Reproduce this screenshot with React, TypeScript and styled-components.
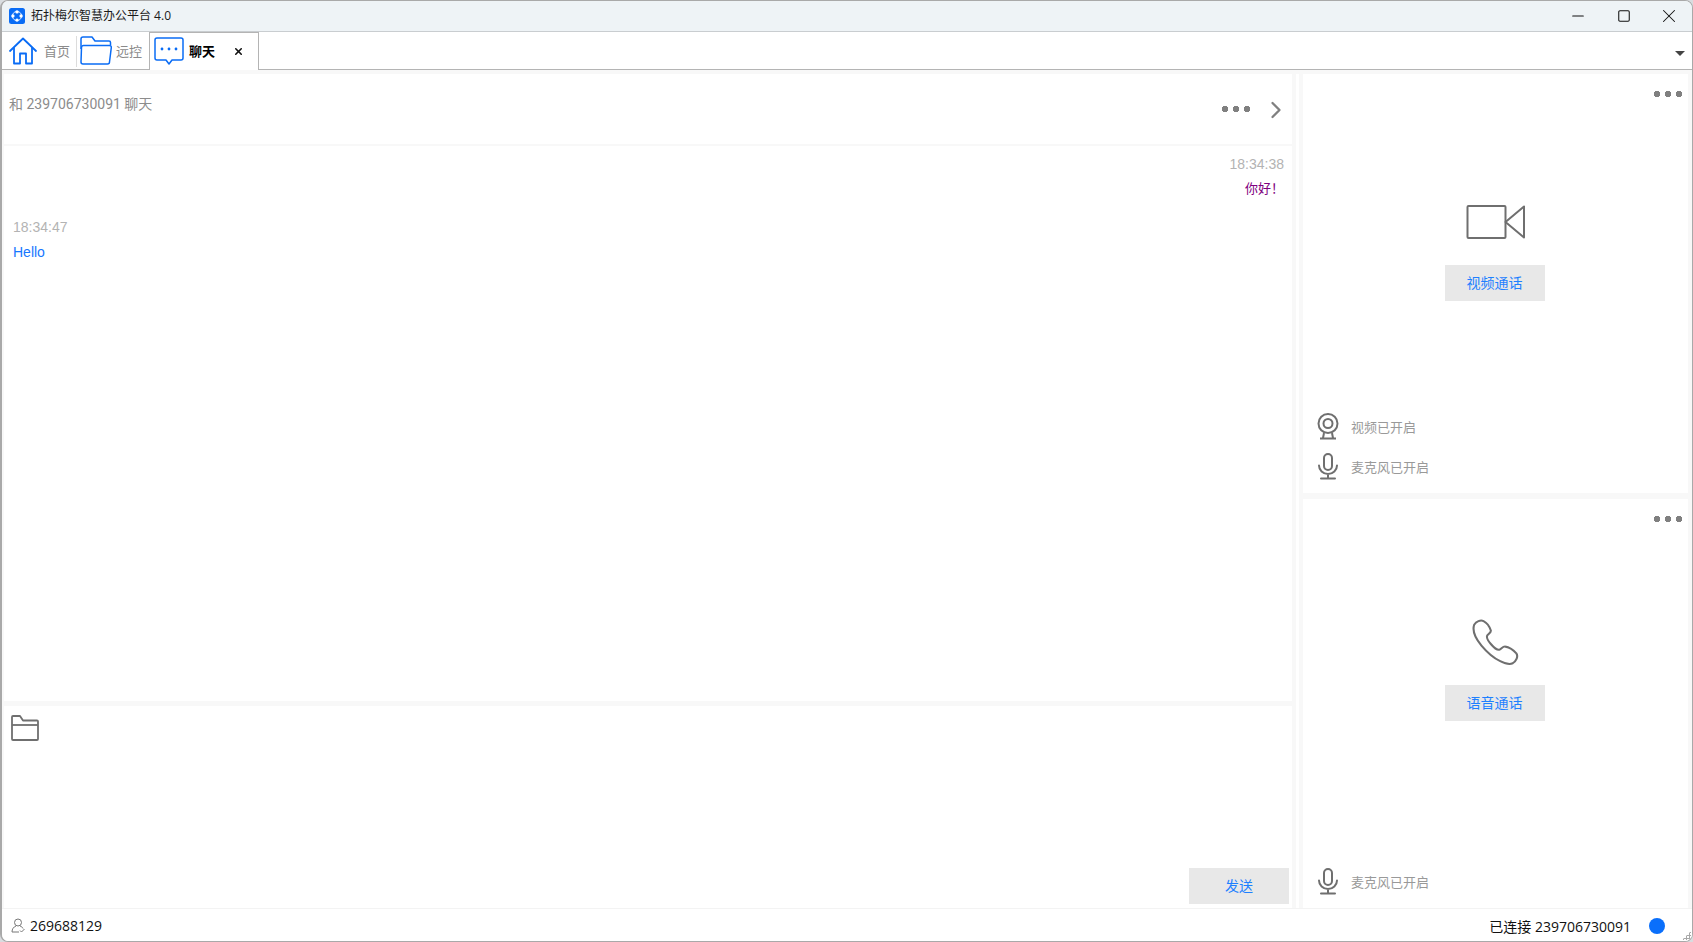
import React from "react";
import styled, { createGlobalStyle } from "styled-components";
import { ChevronRight, Minus, Square, X } from "lucide-react";

const GlobalStyle = createGlobalStyle`
	html, body, #root {
		margin: 0;
		padding: 0;
		width: 100%;
		height: 100%;
		overflow: hidden;
		background: #d9dcdf;
	}
	* {
		box-sizing: border-box;
	}
`;

const uiFont = `"Open Sans", "Noto Sans CJK SC", sans-serif`;
const chatFont = `"Liberation Sans", "Noto Sans CJK SC", sans-serif`;

export default function App() {
	return (
		<>
			<GlobalStyle />
			<Win>
				<TitleBar>
					<AppLogo />
					<AppTitle>拓扑梅尔智慧办公平台 4.0</AppTitle>
					<WinButtons>
						<WinButton><Minus size={18} strokeWidth={1.6} /></WinButton>
						<WinButton><Square size={14} strokeWidth={1.8} /></WinButton>
						<WinButton><X size={22} strokeWidth={1.1} /></WinButton>
					</WinButtons>
				</TitleBar>
				<TabBar>
					<Tab>
						<HomeIcon />
						<TabLabel>首页</TabLabel>
					</Tab>
					<TabDivider />
					<Tab $gap={4}>
						<FolderBlueIcon />
						<TabLabel>远控</TabLabel>
					</Tab>
					<ActiveTab>
						<ChatIcon />
						<ActiveLabel>聊天</ActiveLabel>
						<TabClose><X size={11} strokeWidth={3.5} /></TabClose>
					</ActiveTab>
					<TabMenu />
				</TabBar>
				<Body>
					<ChatColumn>
						<ChatHeader>
							<ChatTitle>和 239706730091 聊天</ChatTitle>
							<Dots $down={9} />
							<HeaderChevron><ChevronRight size={28} strokeWidth={2} /></HeaderChevron>
						</ChatHeader>
						<Messages>
							<Message $mine>
								<MessageTime>18:34:38</MessageTime>
								<MessageText $mine>你好！</MessageText>
							</Message>
							<Message>
								<MessageTime>18:34:47</MessageTime>
								<MessageText>Hello</MessageText>
							</Message>
						</Messages>
						<Composer>
							<FolderIcon />
							<ComposerFoot>
								<ActionButton>发送</ActionButton>
							</ComposerFoot>
						</Composer>
					</ChatColumn>
					<Splitter />
					<CallColumn>
						<CallPanel $grow={420}>
							<PanelTop><Dots /></PanelTop>
							<CallCenter $top={107} $gap={25}>
								<VideoIcon />
								<ActionButton>视频通话</ActionButton>
							</CallCenter>
							<StatusRows>
								<StatusRow><WebcamIcon /><StatusText>视频已开启</StatusText></StatusRow>
								<StatusRow><MicIcon /><StatusText>麦克风已开启</StatusText></StatusRow>
							</StatusRows>
						</CallPanel>
						<CallPanel $grow={410}>
							<PanelTop><Dots /></PanelTop>
							<CallCenter $top={97} $gap={16}>
								<PhoneIcon />
								<ActionButton>语音通话</ActionButton>
							</CallCenter>
							<StatusRows>
								<StatusRow><MicIcon /><StatusText>麦克风已开启</StatusText></StatusRow>
							</StatusRows>
						</CallPanel>
					</CallColumn>
				</Body>
				<StatusBar>
					<UserIcon />
					<StatusValue>269688129</StatusValue>
					<StatusValue $push>已连接 239706730091</StatusValue>
					<OnlineDot />
					<Grip />
				</StatusBar>
			</Win>
		</>
	);
}

function AppLogo() {
	return (
		<svg width="16" height="16" viewBox="0 0 16 16">
			<rect width="16" height="16" rx="2.5" fill="#0a6cf5" />
			<circle cx="8" cy="8" r="4.6" fill="none" stroke="#cfe2ff" strokeWidth="1" />
			<circle cx="8" cy="3.9" r="1.7" fill="#fff" />
			<circle cx="8" cy="12.1" r="1.7" fill="#fff" />
			<circle cx="3.9" cy="8" r="1.7" fill="#fff" />
			<circle cx="12.1" cy="8" r="1.7" fill="#fff" />
		</svg>
	);
}

function HomeIcon() {
	return (
		<svg width="28" height="28" viewBox="0 0 28 28" fill="none" stroke="#0a6cf5" strokeWidth="1.8" strokeLinejoin="round" strokeLinecap="round">
			<path d="M1 14 14 1.5 27 14" />
			<path d="M5 11V26.5H11V16.5H17V26.5H23V11" />
		</svg>
	);
}

function FolderBlueIcon() {
	return (
		<svg width="32" height="29" viewBox="0 0 32 29" fill="none" stroke="#0a6cf5" strokeWidth="1.5" strokeLinejoin="round">
			<path d="M1 13V3a2 2 0 0 1 2-2h9l3 4h14a1.5 1.5 0 0 1 1.5 1.5V9" />
			<path d="M3.500 9.500H29.500a1.800 1.800 0 0 1 1.800 2L29.500 26a2 2 0 0 1-2 2H3a2 2 0 0 1-2-2L1.500 11.500a2 2 0 0 1 2-2Z" />
		</svg>
	);
}

function ChatIcon() {
	return (
		<svg width="30" height="29" viewBox="0 0 30 29" fill="none">
			<path d="M3 1H27a2 2 0 0 1 2 2V21a2 2 0 0 1-2 2H18L15 27 12 23H3a2 2 0 0 1-2-2V3a2 2 0 0 1 2-2Z" stroke="#0a6cf5" strokeWidth="1.5" strokeLinejoin="round" />
			<circle cx="8" cy="12" r="1.4" fill="#0a6cf5" />
			<circle cx="15" cy="12" r="1.4" fill="#0a6cf5" />
			<circle cx="22" cy="12" r="1.4" fill="#0a6cf5" />
		</svg>
	);
}

function VideoIcon() {
	return (
		<svg width="60" height="36" viewBox="-1 0 60 36" fill="none" stroke="#6f6f6f" strokeWidth="2" strokeLinejoin="round">
			<rect x="1.500" y="2" width="38" height="32" rx="1" />
			<path d="M39.500 18 58 2.500V33.500Z" />
		</svg>
	);
}

function PhoneIcon() {
	return (
		<svg width="50" height="50" viewBox="-1 0 48 48" fill="none" stroke="#6f6f6f" strokeWidth="2" strokeLinejoin="round">
			<path d="M3 5.500C5 2.500 9 .5 12 2c3 1.500 6 6 7 9 .5 2-2.500 3.500-3.500 5-1 2 1 5 3.500 8 3 3.500 6 6 8 5.500 2-.5 3.500-3.500 6-3 3 .5 8 3.500 10.500 6.500 2 3 0 7-3.500 9.500-3 1.500-7 .5-12-2-6-3-13-9-18-15C5 19.500 1 11.500 3 5.500Z" />
		</svg>
	);
}

function WebcamIcon() {
	return (
		<svg width="22" height="27" viewBox="0 0 22 27" fill="none" stroke="#6f6f6f" strokeWidth="2">
			<circle cx="11" cy="10.500" r="9.500" />
			<circle cx="11" cy="10.500" r="4.500" />
			<path d="M7 20 6 25M15 20l1 5M3 25.500H19" />
		</svg>
	);
}

function MicIcon() {
	return (
		<svg width="22" height="27" viewBox="0 0 22 27" fill="none" stroke="#6f6f6f" strokeWidth="2" strokeLinecap="round">
			<rect x="7" y="1" width="8" height="16" rx="4" />
			<path d="M2 12.500a9 8.500 0 0 0 18 0M11 21V25.500M4 25.500H18" />
		</svg>
	);
}

function FolderIcon() {
	return (
		<svg width="28" height="26" viewBox="0 0 28 26" fill="none" stroke="#6f6f6f" strokeWidth="1.800" strokeLinejoin="round">
			<path d="M1 7V2a1 1 0 0 1 1-1h7l3 4.500H26a1 1 0 0 1 1 1V24a1 1 0 0 1-1 1H2a1 1 0 0 1-1-1Z" />
			<path d="M1 10H27" />
		</svg>
	);
}

function UserIcon() {
	return (
		<svg width="15" height="15" viewBox="0 0 15 15" fill="none" stroke="#777" strokeWidth="1">
			<circle cx="7" cy="4.500" r="3.500" />
			<path d="M1 14c0-3 1.500-5 4-6M9 8c1.500.5 2.500 1.300 3 2.500M1 14H8M9 12.500l1.500 1.500 3-3" />
		</svg>
	);
}

const Win = styled.div`
	width: 1693px;
	height: 942px;
	display: flex;
	flex-direction: column;
	background: #f8f8f8;
	border: 1px solid #a9a9a9;
	border-left-width: 2px;
	border-radius: 8px;
	overflow: hidden;
	font-family: ${uiFont};
`;

const TitleBar = styled.div`
	flex: none;
	height: 30px;
	display: flex;
	align-items: center;
	padding-left: 7px;
	background: #eef3f6;
`;

const AppTitle = styled.span`
	margin: 0 0 2px 6px;
	font-size: 12px;
	color: #1a1a1a;
`;

const WinButtons = styled.div`
	margin-left: auto;
	display: flex;
`;

const WinButton = styled.div`
	width: 45.5px;
	height: 30px;
	display: flex;
	align-items: center;
	justify-content: center;
	color: #111;
`;

const TabBar = styled.div`
	flex: none;
	height: 39px;
	display: flex;
	align-items: flex-end;
	padding-left: 7px;
	background: #fff;
	border-top: 1px solid #c9cdd0;
	border-bottom: 1px solid #b4b4b4;
`;

const Tab = styled.div<{ $gap?: number }>`
	height: 37px;
	display: flex;
	align-items: center;
	gap: ${(p) => p.$gap ?? 7}px;
`;

const TabLabel = styled.span`
	font-size: 13px;
	color: #8a8a8a;
`;

const TabDivider = styled.div`
	width: 1px;
	height: 31px;
	margin: 0 3px 2px 6px;
	background: #dcdcdc;
`;

const ActiveTab = styled.div`
	height: 38px;
	width: 110px;
	margin: 0 0 -1px 7px;
	padding: 0 0 0 4px;
	display: flex;
	align-items: center;
	background: #fff;
	border: 1px solid #b4b4b4;
	border-bottom: none;
`;

const ActiveLabel = styled.span`
	margin: 0 0 2px 5px;
	font-size: 13px;
	font-weight: 700;
	color: #000;
`;

const TabClose = styled.span`
	margin-left: 18px;
	display: flex;
	color: #111;
`;

const TabMenu = styled.div`
	margin: 0 7px 13px auto;
	border-left: 5px solid transparent;
	border-right: 5px solid transparent;
	border-top: 5px solid #444;
`;

const Body = styled.div`
	flex: 1;
	min-height: 0;
	display: flex;
	padding: 4px 3px 0 2px;
`;

const ChatColumn = styled.div`
	width: 1288px;
	display: flex;
	flex-direction: column;
`;

const ChatHeader = styled.div`
	flex: none;
	height: 70px;
	display: flex;
	align-items: center;
	padding: 0 2px 10px 5px;
	background: #fff;
`;

const ChatTitle = styled.span`
	margin-right: auto;
	margin-bottom: 3px;
	font-size: 14px;
	font-family: "Roboto", "Noto Sans CJK SC", sans-serif;
	color: #8c8c8c;
`;

const Dots = styled.div<{ $down?: number }>`
	width: 28px;
	height: 6px;
	margin-top: ${(p) => p.$down ?? 0}px;
	background: radial-gradient(circle at 3px 3px, #808080 3px, transparent 3.500px) 0 0 / 11px 6px repeat-x;
`;

const HeaderChevron = styled.span`
	margin: 11px 0 0 12px;
	display: flex;
	color: #808080;
`;

const Messages = styled.div`
	flex: 1;
	margin-top: 2px;
	padding: 6px 8px 0 9px;
	background: #fff;
	font-family: ${chatFont};
	font-size: 14px;
`;

const Message = styled.div<{ $mine?: boolean }>`
	display: flex;
	flex-direction: column;
	align-items: ${(p) => (p.$mine ? "flex-end" : "flex-start")};
	margin-bottom: 14px;
`;

const MessageTime = styled.div`
	height: 24px;
	line-height: 24px;
	color: #b3b3b3;
`;

const MessageText = styled.div<{ $mine?: boolean }>`
	height: 25px;
	line-height: ${(p) => (p.$mine ? "25px" : "27px")};
	font-size: ${(p) => (p.$mine ? "13px" : "14px")};
	color: ${(p) => (p.$mine ? "#800080" : "#1677ff")};
`;

const Composer = styled.div`
	flex: none;
	height: 202px;
	margin-top: 5px;
	display: flex;
	flex-direction: column;
	padding: 9px 3px 4px 7px;
	background: #fff;
`;

const ComposerFoot = styled.div`
	margin-top: auto;
	display: flex;
	justify-content: flex-end;
`;

const ActionButton = styled.div`
	width: 100px;
	height: 36px;
	padding-bottom: 2px;
	display: flex;
	align-items: center;
	justify-content: center;
	background: #e8e8e8;
	font-size: 14px;
	color: #1e80ff;
`;

const Splitter = styled.div`
	flex: none;
	width: 11px;
	padding: 0 4px;
	background: #f8f8f8;
	background-clip: content-box;

	&::after {
		content: "";
		display: block;
		height: 100%;
		background: #fff;
	}
`;

const CallColumn = styled.div`
	flex: 1;
	display: flex;
	flex-direction: column;
	gap: 6px;
	padding-right: 1px;
`;

const CallPanel = styled.section<{ $grow: number }>`
	flex: ${(p) => p.$grow} 0 0;
	display: flex;
	flex-direction: column;
	background: #fff;
`;

const PanelTop = styled.div`
	display: flex;
	justify-content: flex-end;
	padding: 17px 6px 0 0;
`;

const CallCenter = styled.div<{ $top: number; $gap: number }>`
	margin-top: ${(p) => p.$top}px;
	padding-right: 2px;
	display: flex;
	flex-direction: column;
	align-items: center;
	gap: ${(p) => p.$gap}px;
`;

const StatusRows = styled.div`
	margin-top: auto;
	display: flex;
	flex-direction: column;
	gap: 13px;
	padding: 0 0 13px 14px;
`;

const StatusRow = styled.div`
	display: flex;
	align-items: center;
	gap: 12px;
`;

const StatusText = styled.span`
	font-size: 13px;
	color: #999;
`;

const StatusBar = styled.div`
	flex: none;
	height: 33px;
	position: relative;
	display: flex;
	align-items: center;
	padding: 1px 27px 0 9px;
	background: #fff;
	border-top: 1px solid #f3f3f3;
`;

const StatusValue = styled.span<{ $push?: boolean }>`
	margin-left: ${(p) => (p.$push ? "auto" : "4px")};
	font-size: 14px;
	color: #111;
`;

const OnlineDot = styled.span`
	width: 16px;
	height: 16px;
	margin-left: 18px;
	border-radius: 50%;
	background: #0a6ffb;
`;

const Grip = styled.span`
	position: absolute;
	right: 1px;
	bottom: 1px;
	width: 9px;
	height: 9px;
	background: radial-gradient(circle, #a8a8a8 1px, transparent 1.200px) 0 0 / 3px 3px;
	clip-path: polygon(100% 0, 100% 100%, 0 100%);
`;
